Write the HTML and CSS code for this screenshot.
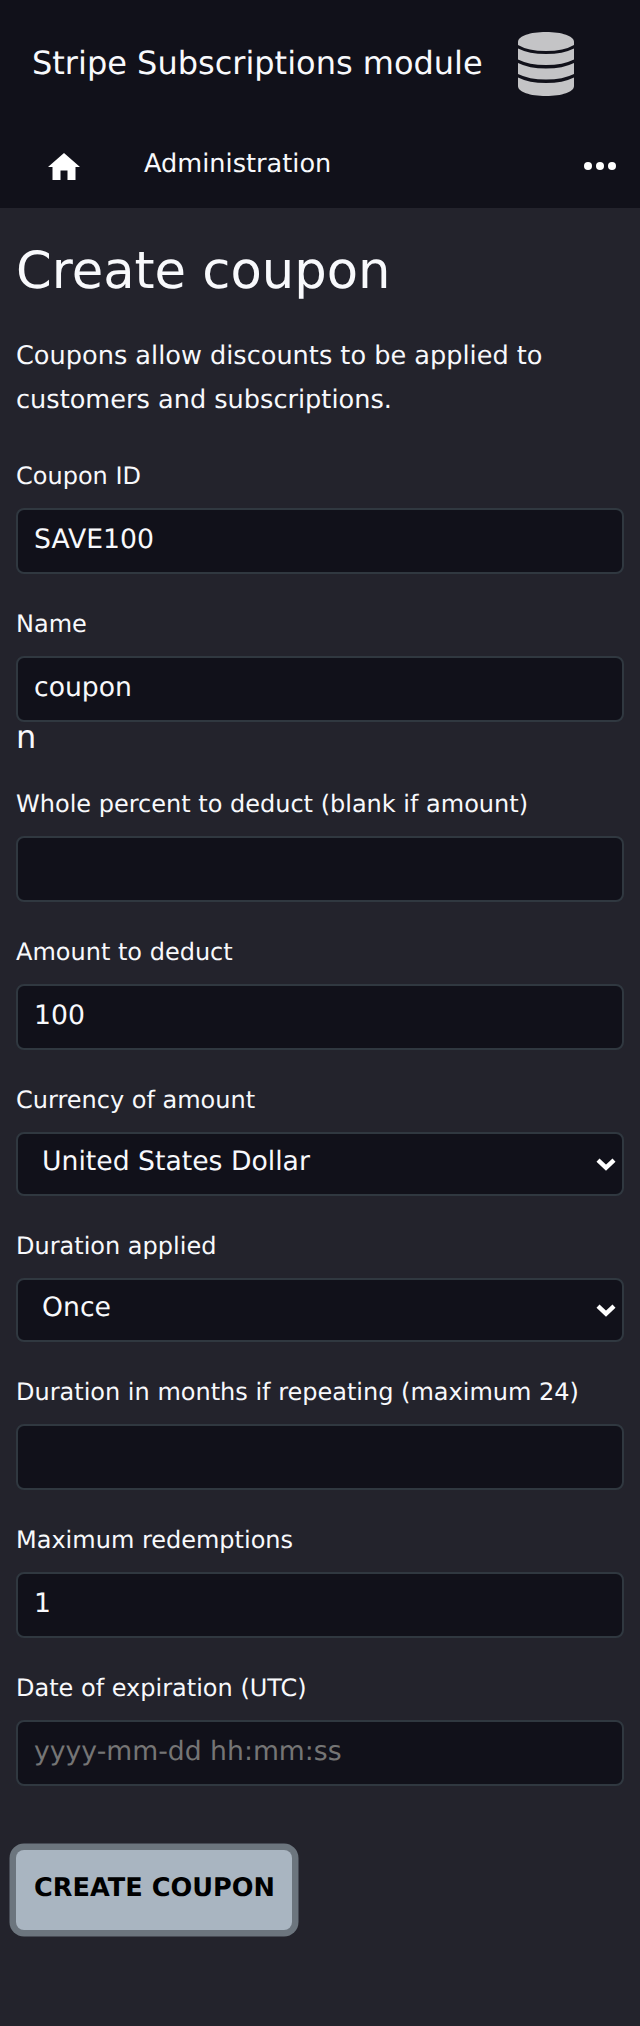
FILE: index.html
```html
<!DOCTYPE html>
<html lang="en">
<head>
<meta charset="utf-8">
<title>Create coupon</title>
<link rel="stylesheet" href="styles.css">
</head>
<body>
<header class="header">
  <div class="brand">
    <span class="brand-name">Stripe Subscriptions module</span>
    <svg class="brand-icon" viewBox="0 0 56 64" width="56" height="64">
      <path d="M0 10C0 4 12 0 28 0S56 4 56 10V13Q46 19 28 19T0 13Z"/>
      <path d="M0 16.500Q11 22 28 22T56 16.500V27.500Q45 33 28 33T0 27.500Z"/>
      <path d="M0 31Q11 36.500 28 36.500T56 31V42Q45 47.500 28 47.500T0 42Z"/>
      <path d="M0 45.500Q11 51 28 51T56 45.500V54C56 60 44 64 28 64S0 60 0 54Z"/>
    </svg>
  </div>
  <nav class="nav">
    <svg class="home" viewBox="0 0 32 27" width="32" height="27"><path d="M16 0 32 14H27.500V27H19.500V17.500H12.500V27H4.500V14H0Z"/></svg>
    <span class="nav-link">Administration</span>
    <svg class="more" viewBox="0 0 32 8" width="32" height="8"><circle cx="4" cy="4" r="4"/><circle cx="16" cy="4" r="4"/><circle cx="28" cy="4" r="4"/></svg>
  </nav>
</header>
<main class="content">
  <h1 class="title">Create coupon</h1>
  <p class="intro">Coupons allow discounts to be applied to customers and subscriptions.</p>
  <form class="form">
    <div class="field"><label class="label" for="id">Coupon ID</label><input class="input" id="id" value="SAVE100"></div>
    <div class="field"><label class="label" for="name">Name</label><input class="input" id="name" value="coupon"><span class="stray">n</span></div>
    <div class="field"><label class="label" for="percent">Whole percent to deduct (blank if amount)</label><input class="input" id="percent"></div>
    <div class="field"><label class="label" for="amount">Amount to deduct</label><input class="input" id="amount" value="100"></div>
    <div class="field"><label class="label" for="currency">Currency of amount</label>
      <div class="select-wrap"><select class="input select" id="currency"><option>United States Dollar</option></select><svg class="chevron" viewBox="0 0 20 14" width="20" height="14"><path d="M2 2.200 10 9.700 18 2.200"/></svg></div></div>
    <div class="field"><label class="label" for="duration">Duration applied</label>
      <div class="select-wrap"><select class="input select" id="duration"><option>Once</option></select><svg class="chevron" viewBox="0 0 20 14" width="20" height="14"><path d="M2 2.200 10 9.700 18 2.200"/></svg></div></div>
    <div class="field"><label class="label" for="months">Duration in months if repeating (maximum 24)</label><input class="input" id="months"></div>
    <div class="field"><label class="label" for="max">Maximum redemptions</label><input class="input" id="max" value="1"></div>
    <div class="field"><label class="label" for="date">Date of expiration (UTC)</label><input class="input" id="date" placeholder="yyyy-mm-dd hh:mm:ss"></div>
    <button class="submit" type="button">CREATE COUPON</button>
  </form>
</main>
</body>
</html>
```
FILE: styles.css
```css
* { box-sizing: border-box; text-rendering: geometricPrecision; }
body {
  margin: 0;
  min-height: 2026px;
  background: #23232c;
  color: #f8f9fc;
  font-family: "DejaVu Sans", sans-serif;
}
.header { height: 208px; background: #11111a; }
.brand { display: flex; align-items: center; height: 128px; padding-left: 32px; }
.brand-name { width: 486px; padding-bottom: 2px; font-size: 32px; line-height: 40px; white-space: nowrap; }
.brand-icon { flex: none; fill: #c4c4c6; }
.nav { display: flex; align-items: flex-start; height: 80px; padding: 16px 24px 0 48px; }
.home { margin-top: 9px; fill: #fff; }
.nav-link { margin-left: 64px; font-size: 25.600px; line-height: 40px; }
.more { margin: 18px 0 0 auto; fill: #fff; }
.content { padding: 33px 16px 0; }
.title { margin: 0; font-size: 51.200px; font-weight: 400; line-height: 60px; }
.intro { margin: 33px 0 0; font-size: 25.600px; line-height: 44px; }
.form { margin-top: 34px; }
.field { display: flex; flex-direction: column; margin-bottom: 30px; }
.label { margin-bottom: 12px; font-size: 24px; line-height: 40px; }
.input {
  width: 100%;
  height: 66px;
  padding: 0 16px 4px;
  border: 2px solid #303840;
  border-radius: 8px;
  outline: 0;
  background: #11111a;
  color: #f8f9fc;
  font: 26.660px "DejaVu Sans", sans-serif;
}
.input::placeholder { color: #757575; opacity: 1; }
.stray { height: 32px; font-size: 32px; line-height: 30px; }
.select-wrap { position: relative; height: 64px; }
.select { height: 64px; padding: 0 24px 6px; appearance: none; }
.chevron { position: absolute; right: 8px; top: 26px; fill: none; stroke: #fff; stroke-width: 4.400; }
.submit {
  display: block;
  width: 276px;
  height: 80px;
  margin-top: 64px;
  padding: 0 0 4px 1px;
  border: 0;
  border-radius: 8px;
  background: #a9b5c1;
  box-shadow: 0 0 0 6.500px #6c757e;
  color: #000;
  font: bold 25.600px "DejaVu Sans", sans-serif;
  white-space: nowrap;
}
```
